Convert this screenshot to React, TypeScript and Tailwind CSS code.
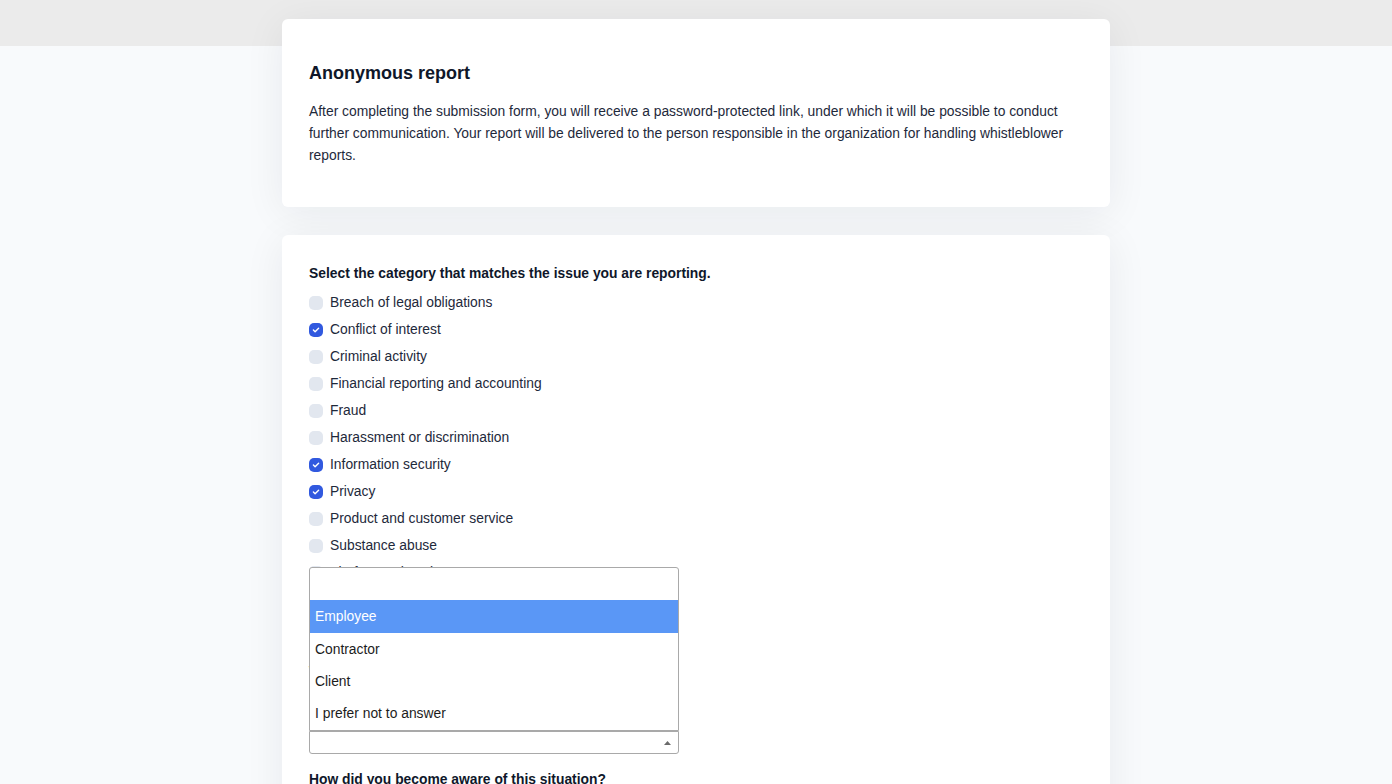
import React, { useState } from 'react';

const CATEGORIES = [
  'Breach of legal obligations',
  'Conflict of interest',
  'Criminal activity',
  'Financial reporting and accounting',
  'Fraud',
  'Harassment or discrimination',
  'Information security',
  'Privacy',
  'Product and customer service',
  'Substance abuse',
  'Theft or embezzlement',
  'Workplace health and safety',
  'Other',
];

const RELATIONS = ['', 'Employee', 'Contractor', 'Client', 'I prefer not to answer'];

function Check({ checked }: { checked: boolean }) {
  return (
    <span
      className={
        checked
          ? 'w-[14px] h-[14px] rounded-[5px] bg-[#3159df] flex items-center justify-center shrink-0'
          : 'w-[14px] h-[14px] rounded-[5px] bg-[#e2e7ef] shrink-0'
      }
    >
      {checked && (
        <svg width="8" height="6" viewBox="0 0 8 6" fill="none">
          <path d="M1.4 3.1L3.1 4.7L6.6 1.2" stroke="white" strokeWidth="1.4" strokeLinecap="round" strokeLinejoin="round" />
        </svg>
      )}
    </span>
  );
}

export default function App() {
  const [selected] = useState<string[]>(['Conflict of interest', 'Information security', 'Privacy']);

  return (
    <div className="min-h-screen bg-[#f8fafc] font-['Liberation_Sans',Arial,sans-serif] text-[#1e293b] overflow-hidden">
      {/* Top band */}
      <div className="h-[46px] bg-[#ebebeb]" />

      <div className="-mt-[27px] flex flex-col items-center gap-[28px]">
        {/* Intro card */}
        <div className="w-[828px] bg-white rounded-md shadow-[0_6px_40px_rgba(15,23,42,0.07)] px-[27px] pt-10 pb-[41px]">
          <h1 className="text-[18px] leading-7 font-bold text-[#0f172a]">Anonymous report</h1>
          <p className="mt-[13px] text-[13.85px] leading-[22px] text-[#1e293b]">
            After completing the submission form, you will receive a password-protected link, under which it will be possible to conduct
            further communication. Your report will be delivered to the person responsible in the organization for handling whistleblower
            reports.
          </p>
        </div>

        {/* Form card */}
        <div className="w-[828px] bg-white rounded-md shadow-[0_6px_40px_rgba(15,23,42,0.07)] px-[27px] pt-[27px] pb-10">
          <h2 className="text-[13.85px] leading-[22px] font-bold text-[#0f172a] mb-[5px]">
            Select the category that matches the issue you are reporting.
          </h2>
          <div className="flex flex-col">
            {CATEGORIES.map((c) => (
              <label key={c} className="h-[27px] flex items-center gap-[7px] text-[13.85px]">
                <Check checked={selected.includes(c)} />
                <span>{c}</span>
              </label>
            ))}
          </div>

          <h2 className="mt-5 text-[13.85px] leading-[22px] font-bold text-[#0f172a]">
            What is your relationship to the organization?
          </h2>

          {/* Select with its open listbox */}
          <div className="relative w-[370px] mt-[49px]">
            <div className="absolute bottom-full left-0 w-full bg-white border border-[#a9a9a9] rounded-t-[3px] flex flex-col">
              {RELATIONS.map((r, i) => (
                <div
                  key={i}
                  className={
                    r === 'Employee'
                      ? 'h-[32.4px] flex items-center px-[5px] text-[13.85px] bg-[#5a97f6] text-white'
                      : 'h-[32.4px] flex items-center px-[5px] text-[13.85px] text-[#1c1c1c]'
                  }
                >
                  {r}
                </div>
              ))}
            </div>
            <div className="h-[23px] border border-[#a9a9a9] rounded-b-[3px] bg-white flex items-center justify-end pr-[7px]">
              <svg width="7" height="4" viewBox="0 0 7 4">
                <path d="M0 4L3.5 0L7 4Z" fill="#6b6b6b" />
              </svg>
            </div>
          </div>

          <h2 className="mt-[14px] text-[13.85px] leading-[22px] font-bold text-[#0f172a]">
            How did you become aware of this situation?
          </h2>
          <div className="h-10" />
        </div>
      </div>
    </div>
  );
}
